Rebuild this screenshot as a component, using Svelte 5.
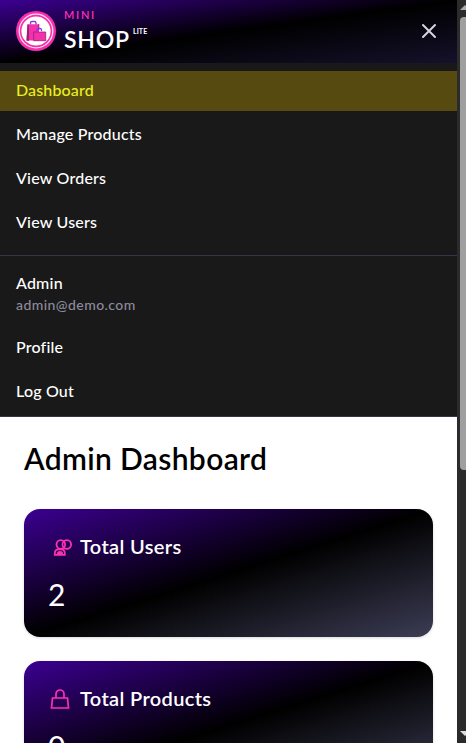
<script>
  const links = ['Dashboard', 'Manage Products', 'View Orders', 'View Users'];
  const account = ['Profile', 'Log Out'];
</script>

<div class="window">
  <div class="page">
    <header>
      <div class="brand">
        <svg width="40" height="40" viewBox="0 0 40 40">
          <circle cx="20" cy="20" r="20" fill="#f62fab" />
          <circle cx="20" cy="20" r="16.8" fill="none" stroke="#ffd9f0" stroke-width="1.3" />
          <circle cx="20" cy="20" r="14.6" fill="#fff" />
          <path d="M14.500 13.500v-1.500q0-1.500 1.500-1.500h2.500q1.500 0 1.500 1.500v1.500" fill="none" stroke="#8b35ef" stroke-width="1.400" />
          <path d="M11.500 13.300h11.500v16.200h-12.500z" fill="#f62fab" />
          <path d="M11.500 13.300l1.500 1v15.500h-2.500zM22.300 13.300h1v6h-1z" fill="#8d2674" />
          <path d="M21 20v-1.200q0-1.300 1.500-1.300h1.500q1.500 0 1.500 1.300v1.200" fill="none" stroke="#8b35ef" stroke-width="1.300" />
          <path d="M17.700 21h12v8.700h-12z" fill="#f62fab" stroke="#8d2674" stroke-width=".8" />
        </svg>
        <div class="name">
          <span class="mini">MINI</span>
          <span class="row"><span class="shop">SHOP</span><span class="lite">LITE</span></span>
        </div>
      </div>
      <svg class="close" width="24" height="24" viewBox="0 0 24 24" fill="none" stroke="#d5d5de" stroke-width="2" stroke-linecap="round"><path d="M6 18L18 6M6 6l12 12" /></svg>
    </header>
    <nav>
      <div class="links">
        {#each links as label, i}
          <div class="link" class:active={i === 0}>{label}</div>
        {/each}
      </div>
      <div class="account">
        <div class="who">
          <div class="user">Admin</div>
          <div class="mail">admin@demo.com</div>
        </div>
        {#each account as label}
          <div class="link">{label}</div>
        {/each}
      </div>
    </nav>
    <main>
      <h1>Admin Dashboard</h1>
      <section class="card">
        <h2>
          <svg width="24" height="24" viewBox="0 0 24 24" fill="none" stroke="#fb32ae" stroke-width="1.800"><circle cx="12.800" cy="9.500" r="4.300" /><circle cx="18.800" cy="9.500" r="4.300" /><path d="M6.800 19.800v-1.500q0-4 4-4h2q4 0 4 4v1.500z" /><path d="M9.800 19q0-2 2.200-2t2.200 2z" /></svg>
          <span>Total Users</span>
        </h2>
        <p>2</p>
      </section>
      <section class="card">
        <h2>
          <svg width="24" height="24" viewBox="0 0 24 24" fill="none" stroke="#fb32ae" stroke-width="1.700"><path d="M4.500 11h15l1 10h-17z" /><path d="M8 11v-4a4 4 0 0 1 8 0v4" /></svg>
          <span>Total Products</span>
        </h2>
        <p>0</p>
      </section>
    </main>
  </div>
  <div class="scrollbar">
    <svg width="9" height="17" viewBox="0 0 9 17"><path d="M3 10l5-5 5 5z" fill="#aaa" /></svg>
    <div class="thumb"></div>
    <svg width="9" height="17" viewBox="0 0 9 17"><path d="M3 5h10l-5 5z" fill="#ddd" /></svg>
  </div>
</div>

<style>
  .window { display: flex; width: 466px; height: 743px; overflow: hidden; font-family: Lato, "Open Sans", sans-serif; font-weight: 500; color: #fff; background: #fff; }
  .page { width: 457px; height: 743px; overflow: hidden; }
  header { box-sizing: border-box; height: 63px; padding: 0 16px; display: flex; justify-content: space-between; align-items: center; background: linear-gradient(to bottom right, #3c0092, #000 50%, #15112b); }
  .brand { display: flex; gap: 8px; align-items: center; }
  .brand svg, .close { margin-top: -1px; }
  .name { display: flex; flex-direction: column; height: 48px; }
  .mini { font-size: 11px; line-height: 14px; letter-spacing: 1.700px; font-weight: 600; color: #fb32ae; }
  .row { display: flex; }
  .shop { font-size: 23px; line-height: 34px; letter-spacing: .8px; font-weight: 600; }
  .lite { font-size: 7px; line-height: 13px; letter-spacing: .1px; font-weight: 700; margin: 3px 0 0 3px; }
  nav { background: #191919; border-bottom: 1px solid #36344c; height: 353px; }
  .links { box-sizing: border-box; height: 192px; padding-top: 8px; display: flex; flex-direction: column; gap: 4px; }
  .link { box-sizing: border-box; height: 40px; line-height: 38px; padding-left: 16px; font-size: 16px; letter-spacing: .2px; }
  .active { background: #564a10; color: #e9ee24; letter-spacing: .15px; }
  .account { border-top: 1px solid #36344c; display: flex; flex-direction: column; gap: 4px; padding-top: 16px; }
  .who { padding-left: 16px; height: 52px; }
  .user { font-size: 16px; line-height: 22px; letter-spacing: .2px; }
  .mail { font-size: 14px; line-height: 22px; letter-spacing: .43px; color: #8c8b9d; }
  main { padding: 24px; display: flex; flex-direction: column; }
  h1 { margin: 0; height: 68px; font-size: 30px; line-height: 34px; letter-spacing: .36px; font-weight: 600; color: #000; }
  .card { box-sizing: border-box; flex: none; height: 128px; padding: 24px; margin-bottom: 24px; border-radius: 16px; background: linear-gradient(to bottom right, #3c0092, #000 50%, #3c3c55); box-shadow: 0 1px 3px rgba(0,0,0,.15); }
  h2 { margin: 0; display: flex; gap: 8px; align-items: center; height: 28px; font-size: 20px; line-height: 26px; letter-spacing: .35px; font-weight: 600; }
  h2 span { height: 28px; }
  p { margin: 16px 0 0; font-size: 30px; line-height: 34px; font-weight: 400; }
  .scrollbar { width: 9px; background: #2b2b2b; display: flex; flex-direction: column; overflow: hidden; }
  .scrollbar svg { display: block; flex: none; }
  .thumb { width: 10px; height: 453px; margin: 0 0 256px 3px; flex: none; border-radius: 4px; background: #9f9f9f; }
</style>
